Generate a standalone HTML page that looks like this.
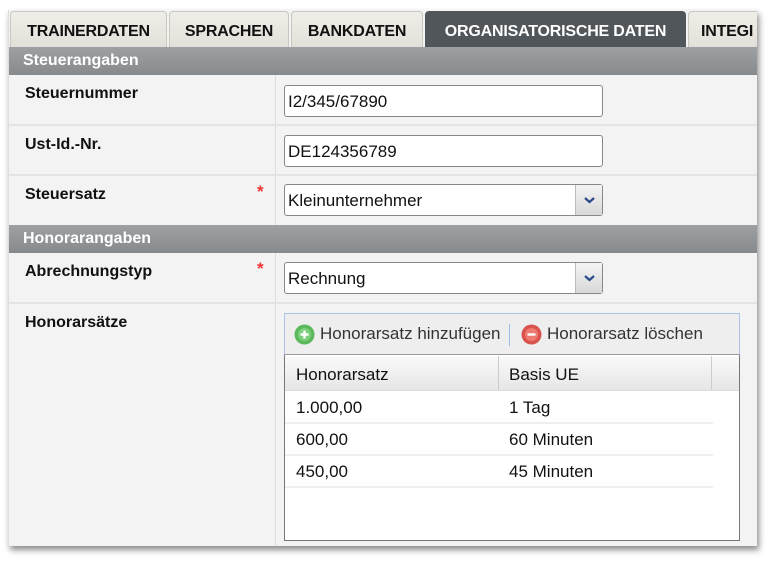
<!DOCTYPE html>
<html><head><meta charset="utf-8"><style>
*{margin:0;padding:0;box-sizing:border-box}
body{width:779px;height:568px;background:#fff;font-family:"Liberation Sans",Arial,sans-serif;position:relative;overflow:hidden}
.box{position:absolute;left:8px;top:10px;width:749px;height:536px;background:#f3f3f3;overflow:hidden;box-shadow:2px 4px 6px rgba(0,0,0,.45);border-left:1px solid #ddd}
.tab{position:absolute;top:1px;height:37px;background:linear-gradient(#f0eee8,#e2e0d8);border:1px solid #c9c7c0;border-bottom:none;border-radius:4px 4px 0 0;font-weight:bold;font-size:16px;line-height:40px;text-align:center;color:#111;letter-spacing:-0.2px}
.tab.act{background:#51565b;color:#fff;border-color:#51565b}
.sec{position:absolute;left:0;width:749px;height:28px;background:linear-gradient(#9da1a4,#878a8c);color:#fff;font-weight:bold;font-size:16px;line-height:28px;padding-left:14px}
.row{position:absolute;left:0;width:749px;border-bottom:2px solid #e3e3e3}
.lab{position:absolute;left:16px;top:10px;font-weight:bold;font-size:16px;color:#111}
.vline{position:absolute;left:266px;top:0;bottom:0;width:1px;background:#ddd}
.star{position:absolute;left:248px;top:6px;color:#e33;font-size:17px;font-weight:bold}
.inp{position:absolute;left:275px;width:319px;height:32px;background:#fff;border:1px solid #888;border-radius:3px;font-size:17px;line-height:32px;padding-left:3px;color:#111}
.arr{position:absolute;right:0;top:0;width:27px;height:30px;background:linear-gradient(#f4f4f4,#d8d8d8);border-left:1px solid #bbb}
.g{position:absolute;left:275px;top:9px;width:456px;height:228px;border:1px solid #777;background:#fff}
.tb{height:42px;background:#eee;border:1px solid #a9c4e6;border-bottom:1px solid #999;margin:-1px -1px 0 -1px;font-size:17px;color:#333;line-height:40px;position:relative}
.hd{position:absolute;top:42px;left:0;right:0;height:35px;background:linear-gradient(#fafafa,#e6e6e6);border-bottom:1px solid #ddd;font-size:17px;color:#111;line-height:37px}
.tr{position:absolute;left:0;width:428px;height:32px;border-bottom:2px solid #eee;font-size:17px;color:#111;line-height:32px}
</style></head><body>
<div class="box">
<div class="tab" style="left:1px;width:157px">TRAINERDATEN</div>
<div class="tab" style="left:160px;width:120px">SPRACHEN</div>
<div class="tab" style="left:282px;width:132px">BANKDATEN</div>
<div class="tab act" style="left:416px;width:261px">ORGANISATORISCHE DATEN</div>
<div class="tab" style="left:679px;width:80px;text-align:left;padding-left:12px">INTEGI</div>
<div class="sec" style="top:37px">Steuerangaben</div>
<div class="row" style="top:65px;height:51px"><div class="vline"></div><div class="lab">Steuernummer</div><div class="inp" style="top:10px">I2/345/67890</div></div>
<div class="row" style="top:116px;height:50px"><div class="vline"></div><div class="lab">Ust-Id.-Nr.</div><div class="inp" style="top:9px">DE124356789</div></div>
<div class="row" style="top:166px;height:49px;border:none"><div class="vline"></div><div class="lab">Steuersatz</div><div class="star">*</div><div class="inp" style="top:8px">Kleinunternehmer<div class="arr"><svg width="27" height="30"><path d="M9 13l4.5 4 4.5-4" stroke="#2a4a8a" stroke-width="2.2" fill="none"/></svg></div></div></div>
<div class="sec" style="top:215px">Honorarangaben</div>
<div class="row" style="top:243px;height:51px"><div class="vline"></div><div class="lab">Abrechnungstyp</div><div class="star">*</div><div class="inp" style="top:9px">Rechnung<div class="arr"><svg width="27" height="30"><path d="M9 13l4.5 4 4.5-4" stroke="#2a4a8a" stroke-width="2.2" fill="none"/></svg></div></div></div>
<div class="row" style="top:294px;height:250px;border:none"><div class="vline"></div><div class="lab">Honorarsätze</div>
<div class="g">
<div class="tb">
<svg style="position:absolute;left:9px;top:10px" width="21" height="21"><circle cx="10.5" cy="10.5" r="10" fill="#5cb85c"/><circle cx="10.5" cy="10.5" r="6.5" fill="#7cd07c"/><path d="M10.5 6.5v8M6.5 10.5h8" stroke="#fff" stroke-width="2.4"/></svg>
<span style="position:absolute;left:35px">Honorarsatz hinzufügen</span>
<div style="position:absolute;left:224px;top:10px;width:1px;height:22px;background:#9bbde6"></div>
<svg style="position:absolute;left:236px;top:10px" width="21" height="21"><circle cx="10.5" cy="10.5" r="10" fill="#d9534f"/><circle cx="10.5" cy="10.5" r="6.5" fill="#ee7a72"/><path d="M6.5 10.5h8" stroke="#fff" stroke-width="2.4"/></svg>
<span style="position:absolute;left:262px">Honorarsatz löschen</span>
</div>
<div class="hd"><span style="position:absolute;left:11px">Honorarsatz</span><div style="position:absolute;left:213px;top:0;bottom:0;width:1px;background:#ccc"></div><span style="position:absolute;left:224px">Basis UE</span><div style="position:absolute;left:426px;top:0;bottom:0;width:1px;background:#ccc"></div></div>
<div class="tr" style="top:78px"><span style="position:absolute;left:11px">1.000,00</span><span style="position:absolute;left:224px">1 Tag</span></div>
<div class="tr" style="top:110px"><span style="position:absolute;left:11px">600,00</span><span style="position:absolute;left:224px">60 Minuten</span></div>
<div class="tr" style="top:142px"><span style="position:absolute;left:11px">450,00</span><span style="position:absolute;left:224px">45 Minuten</span></div>
</div></div>
</div>
</body></html>
